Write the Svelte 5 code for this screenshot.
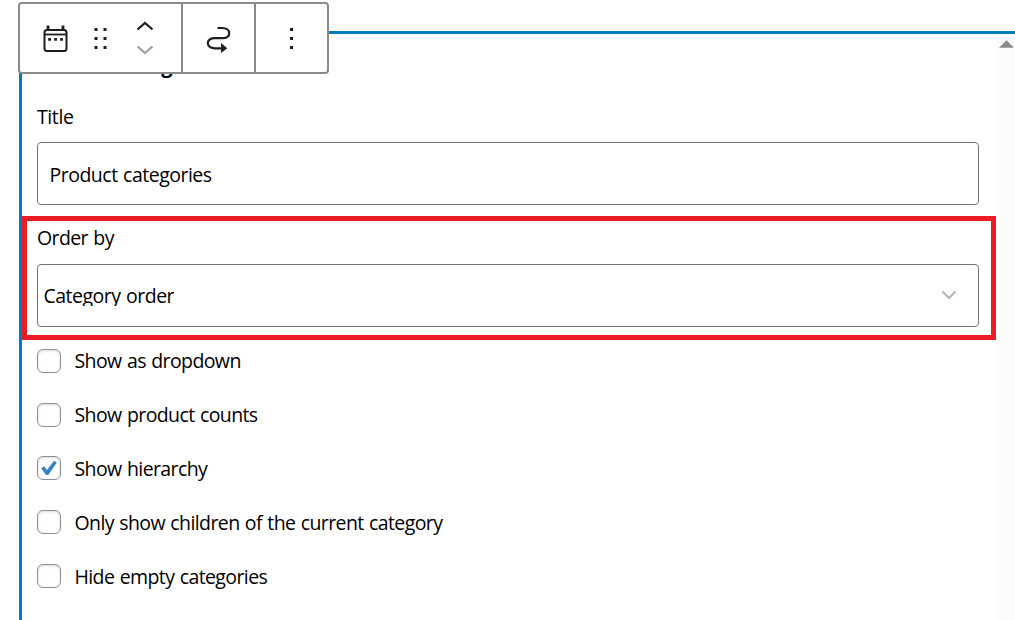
<script lang="ts">
  interface Option {
    id: string;
    label: string;
    checked: boolean;
  }

  let title = $state('Product categories');
  let options = $state<Option[]>([
    { id: 'dropdown', label: 'Show as dropdown', checked: false },
    { id: 'count', label: 'Show product counts', checked: false },
    { id: 'hierarchical', label: 'Show hierarchy', checked: true },
    { id: 'children', label: 'Only show children of the current category', checked: false },
    { id: 'hide-empty', label: 'Hide empty categories', checked: false },
  ]);
</script>

<div class="editor">
  <div class="block">
    <div class="form">
      <h3>Product Categories</h3>

      <div class="field">
        <label for="title">Title</label>
        <input id="title" class="control" type="text" bind:value={title} />
      </div>

      <div class="field highlighted">
        <span class="label">Order by</span>
        <div class="control select" role="combobox" aria-label="Order by" aria-expanded="false" aria-controls="order" tabindex="0">
          <span class="value">Category order</span>
          <svg width="16" height="10" viewBox="0 0 16 10" aria-hidden="true">
            <path d="M1.500 1.500 8 8l6.500-6.500" fill="none" stroke="#b5b5b5" stroke-width="2" />
          </svg>
        </div>
      </div>

      <div class="options">
        {#each options as option (option.id)}
          <label class="option">
            <input type="checkbox" bind:checked={option.checked} />
            <span class="box">
              {#if option.checked}
                <svg width="22" height="22" viewBox="0 0 22 22" aria-hidden="true">
                  <path d="M3.200 11.200 6 9.300l3 3.700 7.100-9.300 2.700 1.700L10.300 18H8z" fill="#3582c4" />
                </svg>
              {/if}
            </span>
            <span class="text">{option.label}</span>
          </label>
        {/each}
      </div>
    </div>

    <div class="scrollbar">
      <svg width="15" height="8" viewBox="0 0 16 8" aria-hidden="true">
        <path d="M8 0 16 8H0z" fill="#8b8b8b" />
      </svg>
    </div>
  </div>

  <!-- Floating block toolbar -->
  <div class="toolbar" role="toolbar" aria-label="Block tools">
    <div class="group first">
      <button type="button" aria-label="Legacy widget">
        <svg width="26" height="30" viewBox="0 0 26 30">
          <rect x="2.500" y="6" width="22" height="21" rx="2.500" fill="none" stroke="#1e1e1e" stroke-width="2" />
          <path d="M2.500 10.500h22" stroke="#1e1e1e" stroke-width="1.800" />
          <path d="M6 1.500V7M21 1.500V7" stroke="#1e1e1e" stroke-width="2.800" />
          <path d="M6.200 14h2.800v2.800H6.200zM12.200 14H15v2.800h-2.800zM18.200 14H21v2.800h-2.800z" fill="#1e1e1e" />
        </svg>
      </button>
      <button type="button" aria-label="Drag">
        <svg width="14" height="24" viewBox="0 0 14 24">
          <path d="M1.500 1h3v3h-3zM10.500 1h3v3h-3zM1.500 10h3v3h-3zM10.500 10h3v3h-3zM1.500 19h3v3h-3zM10.500 19h3v3h-3z" fill="#1e1e1e" />
        </svg>
      </button>
      <div class="movers">
        <button type="button" aria-label="Move up">
          <svg width="18" height="10" viewBox="0 0 18 10">
            <path d="M1.500 8.500 9 2l7.500 6.500" fill="none" stroke="#1e1e1e" stroke-width="2.300" />
          </svg>
        </button>
        <button type="button" aria-label="Move down" disabled>
          <svg width="18" height="10" viewBox="0 0 18 10">
            <path d="M1.500 1.500 9 8l7.500-6.500" fill="none" stroke="#a0a0a0" stroke-width="2.300" />
          </svg>
        </button>
      </div>
    </div>
    <div class="group">
      <button type="button" aria-label="Move to widget area">
        <svg width="26" height="28" viewBox="0 0 26 28">
          <path d="M11.500 3h4.500c4.400 0 7.200 2.200 7.200 5.200 0 3.100-2.700 5-7.200 5H9C4.500 13.200 1.800 15 1.800 18.100c0 3.200 3 5.200 7.200 5.200h8" fill="none" stroke="#1e1e1e" stroke-width="2.200" />
          <path d="M15 18 21.300 23.200 15 28z" fill="#1e1e1e" />
        </svg>
      </button>
    </div>
    <div class="group">
      <button type="button" aria-label="Options">
        <svg width="6" height="24" viewBox="0 0 6 24">
          <path d="M1 1h3v3H1zM1 10h3v3H1zM1 19h3v3H1z" fill="#1e1e1e" />
        </svg>
      </button>
    </div>
  </div>
</div>

<style>
  :global(body) {
    margin: 0;
    background: #fff;
  }

  .editor {
    position: relative;
    box-sizing: border-box;
    height: 620px;
    padding: 31px 0 0 19px;
    overflow: hidden;
    background: #fff;
    color: #000;
    font-family: 'Open Sans', 'Noto Sans', sans-serif;
    font-size: 19.500px;
    letter-spacing: -0.600px;
    word-spacing: 0.900px;
  }

  .block {
    box-sizing: border-box;
    display: flex;
    height: 589px;
    border-top: 3px solid #007cba;
    border-left: 3px solid #007cba;
  }

  .form {
    flex: 1;
    min-width: 0;
    padding: 16px 16px 0 15px;
  }

  h3 {
    margin: 0;
    height: 53px;
    font-size: 20px;
    line-height: 31px;
    font-weight: 700;
    letter-spacing: -0.500px;
  }

  .field {
    position: relative;
    height: 122px;
  }
  .field > label,
  .label {
    display: block;
    height: 39px;
    line-height: 28px;
  }
  .field > label {
    letter-spacing: -0.400px;
  }
  .label {
    line-height: 26px;
  }

  .control {
    box-sizing: border-box;
    display: flex;
    align-items: center;
    width: 942px;
    height: 63px;
    padding: 1px 11.500px 0;
    border: 1px solid #757575;
    border-radius: 4px;
    background: #fff;
    color: #000;
    font: inherit;
    letter-spacing: -0.500px;
    word-spacing: inherit;
  }
  .select {
    justify-content: space-between;
    padding: 0 21px 0 5.500px;
  }
  .select svg {
    margin-bottom: 1px;
  }
  /* the line box is shorter than the glyphs, so descenders are clipped */
  .value {
    height: 21px;
    line-height: 22px;
    overflow: hidden;
  }

  .highlighted::after {
    content: '';
    position: absolute;
    top: -9px;
    left: -15px;
    box-sizing: border-box;
    width: 974px;
    height: 124px;
    border: 5px solid #ed1c24;
    pointer-events: none;
  }

  .options {
    display: flex;
    flex-direction: column;
    gap: 29.800px;
    padding-top: 1.800px;
  }
  .option {
    display: flex;
    gap: 13.500px;
    height: 24px;
    line-height: 24px;
  }
  .option input {
    position: absolute;
    opacity: 0;
    pointer-events: none;
  }
  .box {
    box-sizing: border-box;
    width: 24px;
    height: 24px;
    border: 1px solid #8c8f94;
    border-radius: 6px;
    box-shadow: inset 0 1px 3px rgba(0, 0, 0, 0.15);
  }
  .box svg {
    display: block;
  }
  .text {
    margin-top: 0.600px;
  }

  .scrollbar {
    width: 20px;
    background: #fcfcfc;
  }
  .scrollbar svg {
    display: block;
    margin: 6px 0 0 4px;
  }

  .toolbar {
    position: absolute;
    top: 2px;
    left: 18px;
    box-sizing: border-box;
    display: flex;
    width: 311px;
    height: 72px;
    border: 2px solid #8a8a8a;
    border-radius: 4px;
    background: #fff;
  }
  .group {
    flex: 1;
    display: flex;
    align-items: center;
    justify-content: center;
    padding-top: 2px;
  }
  .group + .group {
    border-left: 2px solid #8a8a8a;
  }
  .first {
    flex: 0 0 161px;
    justify-content: flex-start;
    gap: 25px;
    padding-left: 22px;
    box-sizing: border-box;
  }
  .movers {
    display: flex;
    flex-direction: column;
    gap: 14px;
    margin: -2px 0 0 4px;
  }
  button {
    display: block;
    padding: 0;
    border: 0;
    background: none;
  }
  button svg {
    display: block;
  }
</style>
